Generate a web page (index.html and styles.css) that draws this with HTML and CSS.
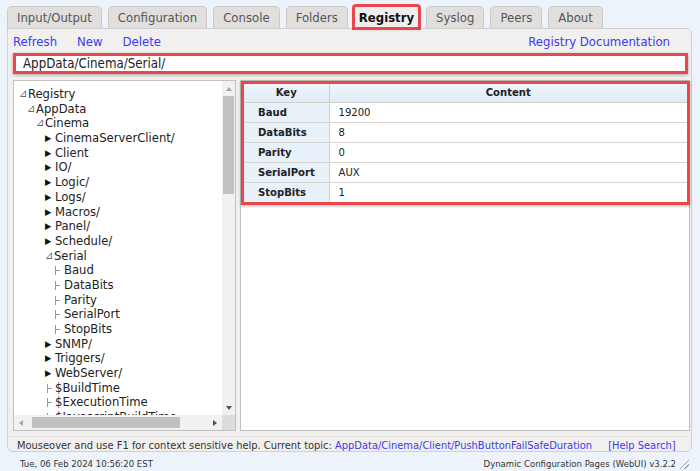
FILE: index.html
```html
<!DOCTYPE html>
<html>
<head>
<meta charset="utf-8">
<link rel="stylesheet" href="styles.css">
</head>
<body>
<div class="page">
  <div class="tabs">
    <div class="tab">Input/Output</div>
    <div class="tab">Configuration</div>
    <div class="tab">Console</div>
    <div class="tab">Folders</div>
    <div class="tab active">Registry</div>
    <div class="tab">Syslog</div>
    <div class="tab">Peers</div>
    <div class="tab">About</div>
  </div>
  <div class="panel">
    <div class="toolbar">
      <div class="actions"><a>Refresh</a><a>New</a><a>Delete</a></div>
      <a>Registry Documentation</a>
    </div>
    <div class="path">AppData/Cinema/Serial/</div>
    <div class="content">
      <div class="tree">
        <div class="tree-body">
          <div class="row l0"><span class="ic open">⊿</span>Registry</div>
          <div class="row l1"><span class="ic open">⊿</span>AppData</div>
          <div class="row l2"><span class="ic open">⊿</span>Cinema</div>
          <div class="row l3"><span class="ic shut">▶</span>CinemaServerClient/</div>
          <div class="row l3"><span class="ic shut">▶</span>Client</div>
          <div class="row l3"><span class="ic shut">▶</span>IO/</div>
          <div class="row l3"><span class="ic shut">▶</span>Logic/</div>
          <div class="row l3"><span class="ic shut">▶</span>Logs/</div>
          <div class="row l3"><span class="ic shut">▶</span>Macros/</div>
          <div class="row l3"><span class="ic shut">▶</span>Panel/</div>
          <div class="row l3"><span class="ic shut">▶</span>Schedule/</div>
          <div class="row l3"><span class="ic open">⊿</span>Serial</div>
          <div class="row l4"><span class="ic leaf"></span>Baud</div>
          <div class="row l4"><span class="ic leaf"></span>DataBits</div>
          <div class="row l4"><span class="ic leaf"></span>Parity</div>
          <div class="row l4"><span class="ic leaf"></span>SerialPort</div>
          <div class="row l4"><span class="ic leaf"></span>StopBits</div>
          <div class="row l3"><span class="ic shut">▶</span>SNMP/</div>
          <div class="row l3"><span class="ic shut">▶</span>Triggers/</div>
          <div class="row l3"><span class="ic shut">▶</span>WebServer/</div>
          <div class="row l3"><span class="ic leaf"></span>$BuildTime</div>
          <div class="row l3"><span class="ic leaf"></span>$ExecutionTime</div>
          <div class="row l3"><span class="ic leaf"></span>$JavascriptBuildTime</div>
        </div>
        <div class="vscroll">
          <span class="arrow up"></span>
          <div class="vthumb"></div>
          <span class="arrow down"></span>
        </div>
        <div class="hscroll">
          <span class="arrow left"></span>
          <div class="hthumb"></div>
          <span class="arrow right"></span>
        </div>
        <div class="corner"></div>
      </div>
      <div class="details">
        <div class="tablebox">
          <table class="kv">
            <thead><tr><th class="k">Key</th><th>Content</th></tr></thead>
            <tbody>
              <tr><td class="k">Baud</td><td>19200</td></tr>
              <tr><td class="k">DataBits</td><td>8</td></tr>
              <tr><td class="k">Parity</td><td>0</td></tr>
              <tr><td class="k">SerialPort</td><td>AUX</td></tr>
              <tr><td class="k">StopBits</td><td>1</td></tr>
            </tbody>
          </table>
        </div>
      </div>
    </div>
    <div class="status">Mouseover and use F1 for context sensitive help. Current topic: <a>AppData/Cinema/Client/PushButtonFailSafeDuration</a><a class="help">[Help Search]</a></div>
  </div>
  <div class="footer">
    <span>Tue, 06 Feb 2024 10:56:20 EST</span>
    <span class="ver">Dynamic Configuration Pages (WebUI) v3.2.2 <span class="grip"></span></span>
  </div>
</div>
</body>
</html>
```
FILE: styles.css
```css
* { box-sizing: border-box; }
html, body { margin: 0; padding: 0; }
body {
  background: #ecf3fb;
  font-family: "DejaVu Sans Condensed", "DejaVu Sans", sans-serif;
  font-stretch: condensed;
  color: #222;
  width: 700px;
  height: 471px;
  overflow: hidden;
}
.page { padding: 6px 8px 0 7px; }
a { color: #3a3af2; text-decoration: none; }

.tabs { display: flex; gap: 6px; height: 22px; }
.tab {
  padding: 0 9px;
  height: 22px;
  line-height: 21px;
  font-size: 13px;
  color: #555;
  background: #e0dfde;
  border: 1px solid #cbc9c7;
  border-bottom: none;
  border-radius: 5px 5px 0 0;
}
.tab.active {
  font-weight: bold;
  color: #111;
  background: #efeeed;
  padding: 0 4px;
  outline: 3px solid #e8474b;
  outline-offset: -1px;
  border-radius: 2px 2px 0 0;
  box-shadow: 0 1px 3px rgba(0,0,0,0.35);
  margin: 0 1px 0 0;
}

.panel {
  background: #f1f0ef;
  border: 1px solid #d2d0ce;
  border-radius: 0 6px 6px 6px;
  padding: 5px 1px 0 5px;
  height: 424px;
  display: flex;
  flex-direction: column;
}
.toolbar {
  display: flex;
  justify-content: space-between;
  height: 16px;
  line-height: 16px;
  font-size: 13px;
  padding-right: 20px;
}
.actions { display: flex; gap: 20px; }
.path {
  margin: 3px 2px 0 0;
  height: 21px;
  border: 3px solid #e8474b;
  background: #fff;
  font-size: 13.2px;
  line-height: 15px;
  padding-left: 7px;
  color: #222;
  box-shadow: 0 1px 3px rgba(0,0,0,0.3);
}
.content {
  margin-top: 6px;
  height: 351px;
  display: flex;
  gap: 4px;
}
.tree {
  width: 223px;
  border: 1px solid #c2c0be;
  background: #fff;
  display: grid;
  grid-template-columns: 1fr 13px;
  grid-template-rows: 1fr 15px;
  overflow: hidden;
}
.tree-body {
  overflow: hidden;
  padding-top: 6px;
  font-size: 12.9px;
  line-height: 14.7px;
  color: #222;
  white-space: nowrap;
}
.row { height: 14.7px; }
.l0 { padding-left: 5px; }
.l1 { padding-left: 13px; }
.l2 { padding-left: 22px; }
.l3 { padding-left: 31px; }
.l4 { padding-left: 39px; }
.ic { display: inline-block; width: 9px; vertical-align: top; }
.ic.open { font-size: 11px; color: #666; width: 9px; }
.ic.shut { font-size: 9px; color: #111; width: 10px; }
.ic.leaf { height: 14.7px; position: relative; width: 11px; }
.ic.leaf::before {
  content: ""; position: absolute; left: 2px; top: 3px; height: 9px; width: 0;
  border-left: 1px solid #999;
}
.ic.leaf::after {
  content: ""; position: absolute; left: 2px; top: 7px; width: 5px; height: 0;
  border-top: 1px solid #999;
}
.l3 .ic.leaf { width: 10px; }
.vscroll {
  background: #f1f1f1;
  display: flex;
  flex-direction: column;
  align-items: center;
}
.vthumb { width: 11px; height: 98px; background: #c1c1c1; margin-top: 5px; }
.vscroll .arrow.down { margin-top: auto; margin-bottom: 5px; }
.arrow { width: 0; height: 0; border: 3px solid transparent; }
.arrow.up { border-bottom: 4px solid #a3a3a3; border-top: none; margin-top: 6px; }
.arrow.down { border-top: 4px solid #505050; border-bottom: none; }
.hscroll {
  background: #f1f1f1;
  display: flex;
  align-items: center;
  padding: 0 5px;
}
.arrow.left { border-right: 4px solid #a3a3a3; border-left: none; }
.arrow.right { border-left: 4px solid #505050; border-right: none; margin-left: auto; }
.hthumb { width: 148px; height: 11px; background: #c1c1c1; margin-left: 9px; }
.corner { background: #dcdcdc; }

.details {
  flex: 1;
  border: 1px solid #c2c0be;
  background: #fff;
}
.tablebox {
  border: 3px solid #e8474b;
  box-shadow: 0 1px 3px rgba(0,0,0,0.3);
  margin-right: -1px;
}
.kv { width: 100%; border-collapse: collapse; font-size: 11.2px; }
.kv th {
  height: 18px;
  background: linear-gradient(#eef5fc, #e1ecf7);
  font-weight: bold;
  text-align: center;
  border-bottom: 1px solid #d3cec9;
  color: #222;
}
.kv th.k { width: 85px; border-right: 1px solid #d3cec9; }
.kv td {
  height: 20px;
  border-top: 1px solid #d8d3ce;
  padding: 0 0 0 9px;
  color: #222;
}
.kv tr:first-child td { border-top: none; }
.kv td.k {
  background: #e8f1fa;
  font-weight: bold;
  padding-left: 14px;
  border-right: 1px solid #d3cec9;
}

.status {
  margin: 5px 4px 0 -4px;
  padding: 2px 0 0 8px;
  border-top: 1px solid #e2e0de;
  font-size: 11px;
  line-height: 14px;
  color: #333;
  white-space: nowrap;
}
.status .help { margin-left: 16px; }

.footer {
  display: flex;
  justify-content: space-between;
  padding: 6px 3px 0 13px;
  font-size: 9.5px;
  color: #333;
  line-height: 12px;
}
.ver { display: flex; align-items: center; gap: 4px; }
.grip {
  width: 9px; height: 9px;
  background: linear-gradient(135deg, transparent 45%, #aaa 45%, #aaa 55%, transparent 55%, transparent 70%, #aaa 70%, #aaa 80%, transparent 80%);
}
```
